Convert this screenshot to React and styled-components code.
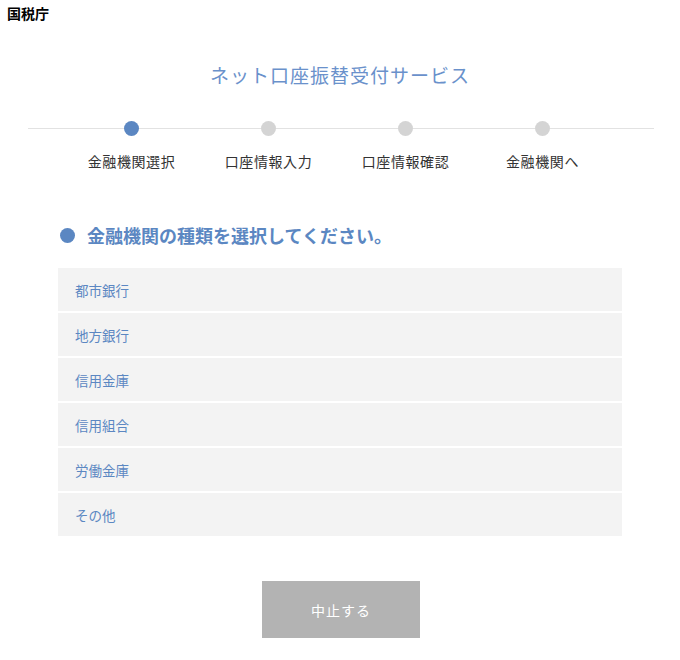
import React from 'react';
import styled, { createGlobalStyle } from 'styled-components';

const steps = ['金融機関選択', '口座情報入力', '口座情報確認', '金融機関へ'];
const kinds = ['都市銀行', '地方銀行', '信用金庫', '信用組合', '労働金庫', 'その他'];

function App() {
	return (
		<>
			<GlobalStyle />
			<Agency>国税庁</Agency>
			<Title>ネット口座振替受付サービス</Title>
			<Stepper>
				{steps.map((label, i) => (
					<Step key={label}>
						<Dot active={i === 0} />
						<StepLabel>{label}</StepLabel>
					</Step>
				))}
			</Stepper>
			<Section>
				<Heading>金融機関の種類を選択してください。</Heading>
				<List>
					{kinds.map((kind) => (
						<Item key={kind}>{kind}</Item>
					))}
				</List>
				<Actions>
					<CancelButton>中止する</CancelButton>
				</Actions>
			</Section>
		</>
	);
}

export default App;

const GlobalStyle = createGlobalStyle`
  body {
    margin: 0;
    background: #fff;
    font-family: "Noto Sans CJK JP", "Noto Sans", sans-serif;
  }
`;

const Agency = styled.div`
  padding: 3px 7px 0;
  font-size: 14px;
  font-weight: 700;
  line-height: 20px;
  color: #000;
`;

const Title = styled.h1`
  margin: 38px 0 0;
  text-align: center;
  font-size: 19px;
  font-weight: 400;
  line-height: 28px;
  letter-spacing: 1px;
  color: #6a91cb;
`;

const Stepper = styled.div`
  position: relative;
  display: flex;
  justify-content: center;
  margin: 32px 26px 0 28px;
  padding-right: 8px;

  &::before {
    content: '';
    position: absolute;
    left: 0;
    right: 0;
    top: 7px;
    height: 1px;
    background: #e2e2e2;
  }
`;

const Step = styled.div`
  position: relative;
  display: flex;
  flex-direction: column;
  align-items: center;
  width: 137px;
`;

const Dot = styled.span`
  width: 15px;
  height: 15px;
  border-radius: 50%;
  background: ${(p) => (p.active ? '#5b87c2' : '#d4d4d4')};
`;

const StepLabel = styled.span`
  margin-top: 15px;
  font-size: 14px;
  line-height: 20px;
  letter-spacing: 0.6px;
  color: #333;
`;

const Section = styled.div`
  margin: 0 58px;
`;

const Heading = styled.h2`
  display: flex;
  align-items: center;
  gap: 12px;
  margin: 51px 0 0 2px;
  font-size: 18px;
  font-weight: 700;
  line-height: 26px;
  color: #5b87c2;

  &::before {
    content: '';
    width: 15px;
    height: 15px;
    border-radius: 50%;
    background: #5b87c2;
  }
`;

const List = styled.div`
  display: flex;
  flex-direction: column;
  gap: 2px;
  margin-top: 20px;
`;

const Item = styled.div`
  height: 43px;
  display: flex;
  align-items: center;
  padding-left: 17px;
  background: #f3f3f3;
  font-size: 13.5px;
  color: #5b87c2;
  cursor: pointer;
`;

const Actions = styled.div`
  display: flex;
  justify-content: center;
  margin-top: 45px;
`;

const CancelButton = styled.button`
  width: 158px;
  height: 57px;
  border: 0;
  background: #b3b3b3;
  color: #fff;
  font-family: inherit;
  font-size: 14px;
  letter-spacing: 1px;
  margin-left: 2px;
`;
